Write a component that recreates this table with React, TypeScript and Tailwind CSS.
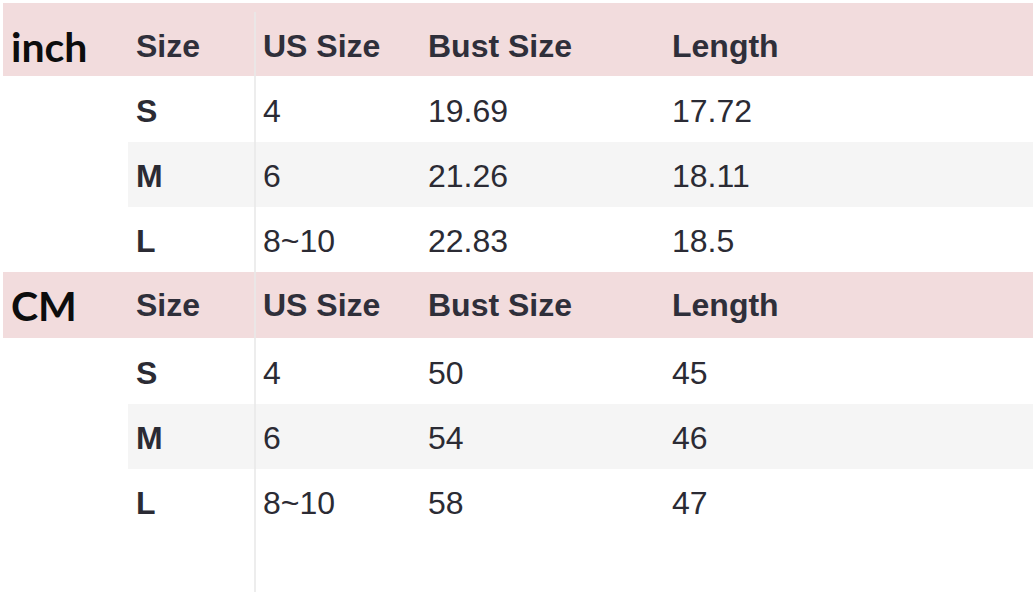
import React from "react";

type Row = { size: string; us: string; bust: string; length: string };

const INCH: Row[] = [
  { size: "S", us: "4", bust: "19.69", length: "17.72" },
  { size: "M", us: "6", bust: "21.26", length: "18.11" },
  { size: "L", us: "8~10", bust: "22.83", length: "18.5" },
];

const CM: Row[] = [
  { size: "S", us: "4", bust: "50", length: "45" },
  { size: "M", us: "6", bust: "54", length: "46" },
  { size: "L", us: "8~10", bust: "58", length: "47" },
];

const COLS = "grid grid-cols-[125px_127px_165px_244px_1fr]";

function Section({ label, rows, first }: { label: string; rows: Row[]; first?: boolean }) {
  return (
    <div>
      <div className={`${COLS} bg-[#f2dcdd] ${first ? "h-[73px] pt-[13px]" : "h-[66px]"} items-center text-[#2f2f3a] font-bold`}>
        <div
          className="pl-[8px] text-[41px] font-bold text-[#0d0d0d] leading-none"
          style={{ fontFamily: "Lato, 'Open Sans', sans-serif" }}
        >
          {label}
        </div>
        <div className="pl-[8px]">Size</div>
        <div className="pl-[8px]">US Size</div>
        <div className="pl-[8px]">Bust Size</div>
        <div className="pl-[8px]">Length</div>
      </div>
      {rows.map((r, i) => (
        <div key={r.size} className={`${COLS} ${i === 0 ? "h-[66px]" : "h-[65px]"} items-center text-[#2b2b34]`}>
          <div className="h-full bg-white" />
          <div className={`h-full flex items-center pt-[3px] pl-[8px] font-bold ${i === 1 ? "bg-[#f5f5f5]" : ""}`}>{r.size}</div>
          <div className={`h-full flex items-center pt-[3px] pl-[8px] ${i === 1 ? "bg-[#f5f5f5]" : ""}`}>{r.us}</div>
          <div className={`h-full flex items-center pt-[3px] pl-[8px] ${i === 1 ? "bg-[#f5f5f5]" : ""}`}>{r.bust}</div>
          <div className={`h-full flex items-center pt-[3px] pl-[8px] ${i === 1 ? "bg-[#f5f5f5]" : ""}`}>{r.length}</div>
        </div>
      ))}
    </div>
  );
}

export default function App() {
  return (
    <div
      className="relative w-[1036px] h-[594px] bg-white overflow-hidden pt-[3px] pl-[3px] text-[32px] leading-none"
      style={{ fontFamily: "'Liberation Sans', Arial, sans-serif" }}
    >
      <div className="w-[1030px]">
        <Section label="inch" rows={INCH} first />
        <Section label="CM" rows={CM} />
      </div>
      {/* faint column divider that runs the full height */}
      <div className="absolute left-[254px] top-[12px] bottom-[2px] w-[2px] bg-[#e9e9e9] opacity-80" />
    </div>
  );
}
